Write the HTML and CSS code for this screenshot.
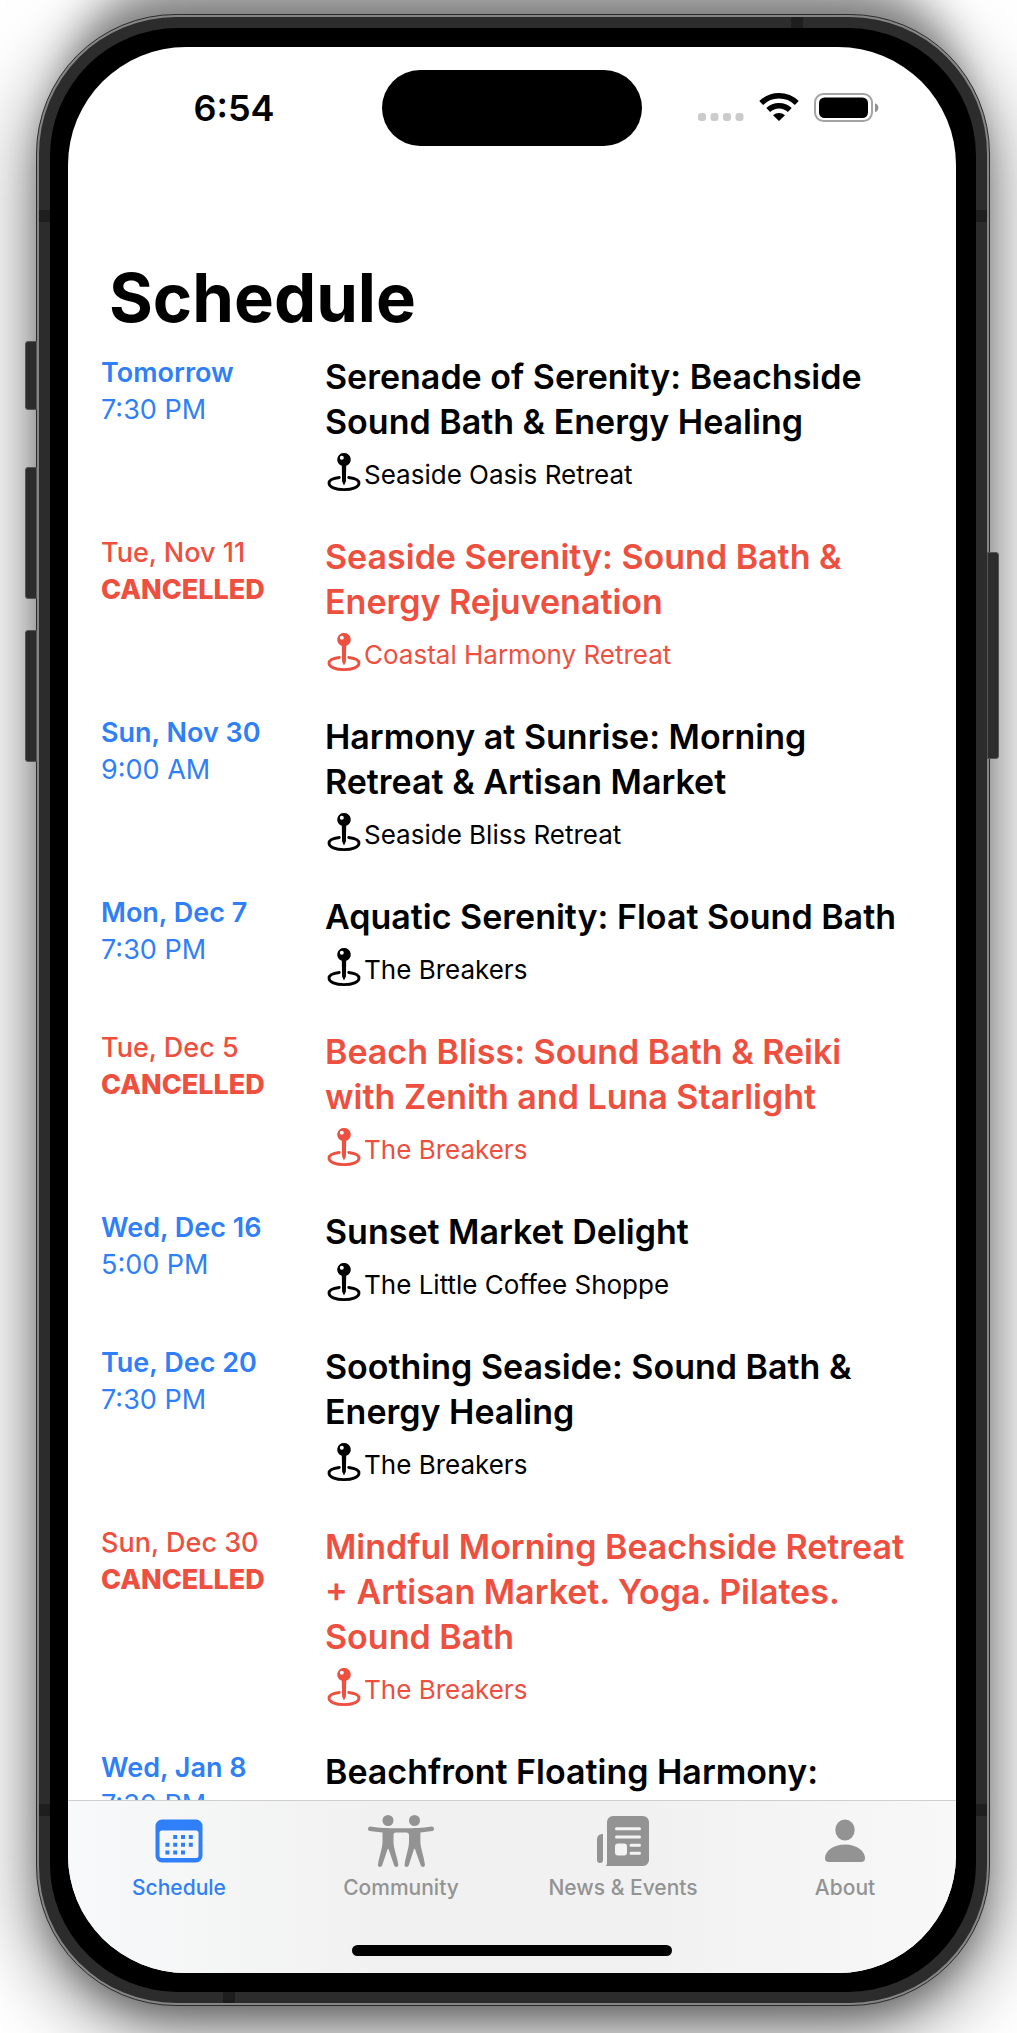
FILE: index.html
```html
<!DOCTYPE html>
<html lang="en">
<head>
<meta charset="utf-8">
<meta name="viewport" content="width=device-width, initial-scale=1">
<title>Schedule</title>
<link rel="stylesheet" href="styles.css">
</head>
<body>
<svg class="sprite" aria-hidden="true">
  <symbol id="pin" viewBox="0 0 34 40">
    <path fill="currentColor" fill-rule="evenodd" d="M17 1a6.500 6.500 0 0 1 2.200 12.700L18.900 29.500 17 33.500 15.100 29.500 14.800 13.700A6.500 6.500 0 0 1 17 1zM14.800 3.700a2 2 0 1 0 0 4 2 2 0 0 0 0-4z"/>
    <path fill="none" stroke="currentColor" stroke-width="2.800" stroke-linecap="round" d="M12.300 25.500C6 26.200 2 28.500 2 31.300c0 3.700 6.500 6.300 15 6.300s15-2.600 15-6.300c0-2.800-4-5.100-10.300-5.800"/>
  </symbol>
</svg>
<div class="phone">
  <span class="key key-action"></span>
  <span class="key key-up"></span>
  <span class="key key-down"></span>
  <span class="key key-side"></span>
  <div class="frame">
    <span class="band band-left band-high"></span>
    <span class="band band-left band-low"></span>
    <span class="band band-right band-high"></span>
    <span class="band band-right band-low"></span>
    <span class="band band-top"></span>
    <span class="band band-bottom"></span>
    <div class="bezel">
      <div class="screen">
        <div class="status">
          <time class="clock">6:54</time>
          <div class="island"></div>
          <div class="indicators">
            <svg width="46" height="32" viewBox="0 0 46 32" role="img" aria-label="No signal" fill="#cbcbcb">
              <rect x="0" y="21" width="8" height="8" rx="3"/><rect x="12.500" y="21" width="8" height="8" rx="3"/><rect x="25" y="21" width="8" height="8" rx="3"/><rect x="37.500" y="21" width="8" height="8" rx="3"/>
            </svg>
            <svg width="40" height="32" viewBox="0 0 40 32" role="img" aria-label="Wi-Fi">
              <g fill="none" stroke="#000" stroke-width="5.500"><path d="M2.200 11a25.500 25.500 0 0 1 35.600 0"/><path d="M9.200 18.100a15.700 15.700 0 0 1 21.600 0"/></g>
              <path d="M14 23.200a9 9 0 0 1 12 0L20 29z"/>
            </svg>
            <svg width="66" height="32" viewBox="0 0 66 32" role="img" aria-label="Battery full">
              <rect x="1" y="2" width="57" height="27" rx="8.500" fill="none" stroke="#a4a4a4" stroke-width="2"/>
              <rect x="5" y="5.500" width="49" height="20.500" rx="5.500"/>
              <path fill="#909090" d="M61 11.200c4.500 1.500 4.500 7.500 0 9z"/>
            </svg>
          </div>
        </div>
        <main class="content">
          <h1 class="heading">Schedule</h1>
          <ul class="events">
            <li class="event">
              <div class="when"><strong class="day">Tomorrow</strong><span class="hour">7:30 PM</span></div>
              <div class="what"><h2 class="title">Serenade of Serenity: Beachside Sound Bath &amp; Energy Healing</h2><p class="place"><svg class="pin"><use href="#pin"/></svg><span>Seaside Oasis Retreat</span></p></div>
            </li>
            <li class="event cancelled">
              <div class="when"><strong class="day">Tue, Nov 11</strong><span class="hour">CANCELLED</span></div>
              <div class="what"><h2 class="title">Seaside Serenity: Sound Bath &amp; Energy Rejuvenation</h2><p class="place"><svg class="pin"><use href="#pin"/></svg><span>Coastal Harmony Retreat</span></p></div>
            </li>
            <li class="event">
              <div class="when"><strong class="day">Sun, Nov 30</strong><span class="hour">9:00 AM</span></div>
              <div class="what"><h2 class="title">Harmony at Sunrise: Morning Retreat &amp; Artisan Market</h2><p class="place"><svg class="pin"><use href="#pin"/></svg><span>Seaside Bliss Retreat</span></p></div>
            </li>
            <li class="event">
              <div class="when"><strong class="day">Mon, Dec 7</strong><span class="hour">7:30 PM</span></div>
              <div class="what"><h2 class="title">Aquatic Serenity: Float Sound Bath</h2><p class="place"><svg class="pin"><use href="#pin"/></svg><span>The Breakers</span></p></div>
            </li>
            <li class="event cancelled">
              <div class="when"><strong class="day">Tue, Dec 5</strong><span class="hour">CANCELLED</span></div>
              <div class="what"><h2 class="title">Beach Bliss: Sound Bath &amp; Reiki with Zenith and Luna Starlight</h2><p class="place"><svg class="pin"><use href="#pin"/></svg><span>The Breakers</span></p></div>
            </li>
            <li class="event">
              <div class="when"><strong class="day">Wed, Dec 16</strong><span class="hour">5:00 PM</span></div>
              <div class="what"><h2 class="title">Sunset Market Delight</h2><p class="place"><svg class="pin"><use href="#pin"/></svg><span>The Little Coffee Shoppe</span></p></div>
            </li>
            <li class="event">
              <div class="when"><strong class="day">Tue, Dec 20</strong><span class="hour">7:30 PM</span></div>
              <div class="what"><h2 class="title">Soothing Seaside: Sound Bath &amp; Energy Healing</h2><p class="place"><svg class="pin"><use href="#pin"/></svg><span>The Breakers</span></p></div>
            </li>
            <li class="event cancelled">
              <div class="when"><strong class="day">Sun, Dec 30</strong><span class="hour">CANCELLED</span></div>
              <div class="what"><h2 class="title">Mindful Morning Beachside Retreat + Artisan Market. Yoga. Pilates. Sound Bath</h2><p class="place"><svg class="pin"><use href="#pin"/></svg><span>The Breakers</span></p></div>
            </li>
            <li class="event">
              <div class="when"><strong class="day">Wed, Jan 8</strong><span class="hour">7:30 PM</span></div>
              <div class="what"><h2 class="title">Beachfront Floating Harmony:</h2></div>
            </li>
          </ul>
        </main>
        <nav class="tabs">
          <div class="tab-row">
            <a class="tab active" href="#schedule" aria-current="page">
              <svg width="48" height="54" viewBox="0 0 48 54" aria-hidden="true">
                <path fill="currentColor" fill-rule="evenodd" d="M7 5.500h34a6.500 6.500 0 0 1 6.500 6.500v30a6.500 6.500 0 0 1-6.500 6.500H7A6.500 6.500 0 0 1 .500 42V12A6.500 6.500 0 0 1 7 5.500zM7 16.500a2.500 2.500 0 0 0-2.500 2.500v22.500A2.500 2.500 0 0 0 7 44h34a2.500 2.500 0 0 0 2.500-2.500V19a2.500 2.500 0 0 0-2.500-2.500z"/>
                <g stroke="currentColor" stroke-width="4" stroke-dasharray="4 3.800"><path d="M18.200 23h20"/><path d="M10.400 30.800h27.600"/><path d="M10.400 38.400h20"/></g>
              </svg>
              <span>Schedule</span>
            </a>
            <a class="tab" href="#community">
              <svg width="68" height="54" viewBox="0 0 68 54" aria-hidden="true">
                <g fill="currentColor"><circle cx="21" cy="6.500" r="5.500"/><circle cx="47.500" cy="6.500" r="5.500"/>
                <path d="M3.300 12.500C14 14.300 22 14.200 34 14.200s20 .1 30.700-1.700a2.300 2.300 0 0 1 .7 4.500l-12 1.600V28c0 5.500 3.600 14.500 4.500 22.800.2 2.600-3.500 3.100-4.200.5L48.300 36c-.4-1.600-1.200-1.600-1.600 0L41.800 51.300c-.8 2.600-4.600 2-4.200-.6C38.500 43 42 34 42 28v-6.500c0-2.300-1-3-2.800-3h-10.200c-1.800 0-2.500.7-2.500 3V28c0 6 3.600 14.500 4.800 22.700.3 2.600-3.400 3.200-4.200.6L21.900 36c-.4-1.600-1.200-1.600-1.600 0L15.200 51.300c-.8 2.600-4.600 2-4.200-.6C12 43 15.500 34 15.500 28v-9.400L2.600 17a2.300 2.300 0 0 1 .7-4.500z"/></g>
              </svg>
              <span>Community</span>
            </a>
            <a class="tab" href="#news">
              <svg width="54" height="54" viewBox="0 0 54 54" aria-hidden="true">
                <path fill="currentColor" fill-rule="evenodd" d="M17 2h30a6 6 0 0 1 6 6v38a6 6 0 0 1-6 6H9.500C11 51 11 50 11 48V8a6 6 0 0 1 6-6z"/>
                <path fill="currentColor" d="M7 20v26a3 3 0 0 1-6 0V26c0-4 2-6 6-6z"/>
                <g stroke="#f3f3f3" stroke-width="3" stroke-linecap="round"><path d="M20.500 14.800h23M20.500 23h23M35 31.200h8.500M35 39.300h8.500"/></g>
                <rect x="19" y="29.500" width="12" height="12" rx="3" fill="#f3f3f3"/>
              </svg>
              <span>News &amp; Events</span>
            </a>
            <a class="tab" href="#about">
              <svg width="40" height="54" viewBox="0 0 40 54" aria-hidden="true">
                <g fill="currentColor"><ellipse cx="20" cy="16" rx="9.700" ry="10.500"/><path d="M4 48c-3 0-4-1.600-4-4C0 37.500 8 30.500 20 30.500S40 37.500 40 44c0 2.400-1 4-4 4z"/></g>
              </svg>
              <span>About</span>
            </a>
          </div>
          <div class="home-bar"></div>
        </nav>
      </div>
    </div>
  </div>
</div>
</body>
</html>
```
FILE: styles.css
```css
* { box-sizing: border-box; }

body {
  margin: 0;
  height: 100vh;
  display: flex;
  padding: 14px 27px 27px 36px;
  overflow: hidden;
  background: #fff;
  font-family: Inter, "Liberation Sans", sans-serif;
  color: #000;
}

.sprite { position: absolute; width: 0; height: 0; }

.phone {
  position: relative;
  flex: 1;
  display: flex;
  padding: 2px;
  border: 1px solid #2b2b2b;
  border-radius: 140px;
  background: #858585;
  box-shadow:
    0 16px 32px -6px rgba(0, 0, 0, .3),
    0 20px 80px rgba(0, 0, 0, .55),
    0 -72px 40px -36px rgba(0, 0, 0, .36);
}

.frame {
  position: relative;
  flex: 1;
  display: flex;
  padding: 11px;
  border-radius: 137px;
  background: #2c2c2c;
}

.bezel {
  position: relative;
  flex: 1;
  display: flex;
  padding: 19px 20px 19px 18px;
  border-radius: 128px;
  background: #000;
}

.screen {
  flex: 1;
  min-width: 0;
  display: flex;
  flex-direction: column;
  overflow: hidden;
  border-radius: 118px;
  background: #fff;
}

/* hardware keys and antenna bands */
.key {
  position: absolute;
  width: 12px;
  border: 1px solid #555;
  background: #2c2c2c;
}
.key-action { left: -12px; top: 326px; height: 69px; border-radius: 3px 0 0 3px; }
.key-up { left: -12px; top: 452px; height: 132px; border-radius: 3px 0 0 3px; }
.key-down { left: -12px; top: 615px; height: 132px; border-radius: 3px 0 0 3px; }
.key-side { right: -10px; top: 537px; height: 207px; border-radius: 0 3px 3px 0; }

.band { position: absolute; background: #1e1e1e; }
.band-left, .band-right { width: 11px; height: 12px; }
.band-left { left: 0; }
.band-right { right: 0; }
.band-high { top: 193px; }
.band-low { bottom: 187px; }
.band-top, .band-bottom { width: 12px; height: 11px; }
.band-top { top: 0; right: 184px; }
.band-bottom { bottom: 0; left: 184px; }

.status {
  display: grid;
  grid-template-columns: 1fr 260px 1fr;
  align-items: center;
  padding-top: 23px;
}
.clock {
  padding-left: 18px;
  text-align: center;
  font-size: 36px;
  line-height: 44px;
  font-weight: 600;
}
.island { height: 76px; border-radius: 38px; background: #000; }
.indicators { display: flex; align-items: center; gap: 15px; padding-left: 56px; }
.indicators svg { flex: none; }

.content {
  flex: 1;
  min-height: 0;
  overflow: hidden;
  padding: 112px 44px 0 33px;
}
.heading {
  margin: 0 0 16px;
  padding-left: 8px;
  font-size: 67px;
  line-height: 80px;
  font-weight: 700;
}

.events {
  display: flex;
  flex-direction: column;
  gap: 42px;
  margin: 0;
  padding: 0;
  list-style: none;
}
.event { display: grid; grid-template-columns: 224px 1fr; }
.when {
  display: flex;
  flex-direction: column;
  color: #2f7ff8;
  font-size: 27px;
  line-height: 37px;
}
.day { font-weight: 600; }
.title {
  margin: 0;
  font-size: 34px;
  line-height: 45px;
  font-weight: 600;
}
.place {
  display: flex;
  align-items: flex-end;
  gap: 3px;
  margin: 8px 0 0 2px;
  font-size: 26px;
  line-height: 34px;
}
.pin { flex: none; width: 34px; height: 40px; }

.cancelled, .cancelled .when { color: #ee4f3f; }
.cancelled .day { font-weight: 500; }
.cancelled .hour { font-weight: 800; }

.tabs {
  flex: none;
  display: flex;
  flex-direction: column;
  gap: 44px;
  padding: 13px 0 17px;
  border-top: 1px solid #cfcfcf;
  background: linear-gradient(90deg, #f8f9fa, #f1f1f1 35%, #f1f1f1 65%, #f8f8f8);
}
.tab-row { display: grid; grid-template-columns: repeat(4, 1fr); }
.tab {
  display: flex;
  flex-direction: column;
  align-items: center;
  gap: 7px;
  color: #939393;
  font-size: 21px;
  line-height: 26px;
  font-weight: 500;
  text-decoration: none;
}
.active { color: #2f7ff8; }
.home-bar {
  align-self: center;
  width: 36%;
  height: 11px;
  border-radius: 6px;
  background: #000;
}
```
